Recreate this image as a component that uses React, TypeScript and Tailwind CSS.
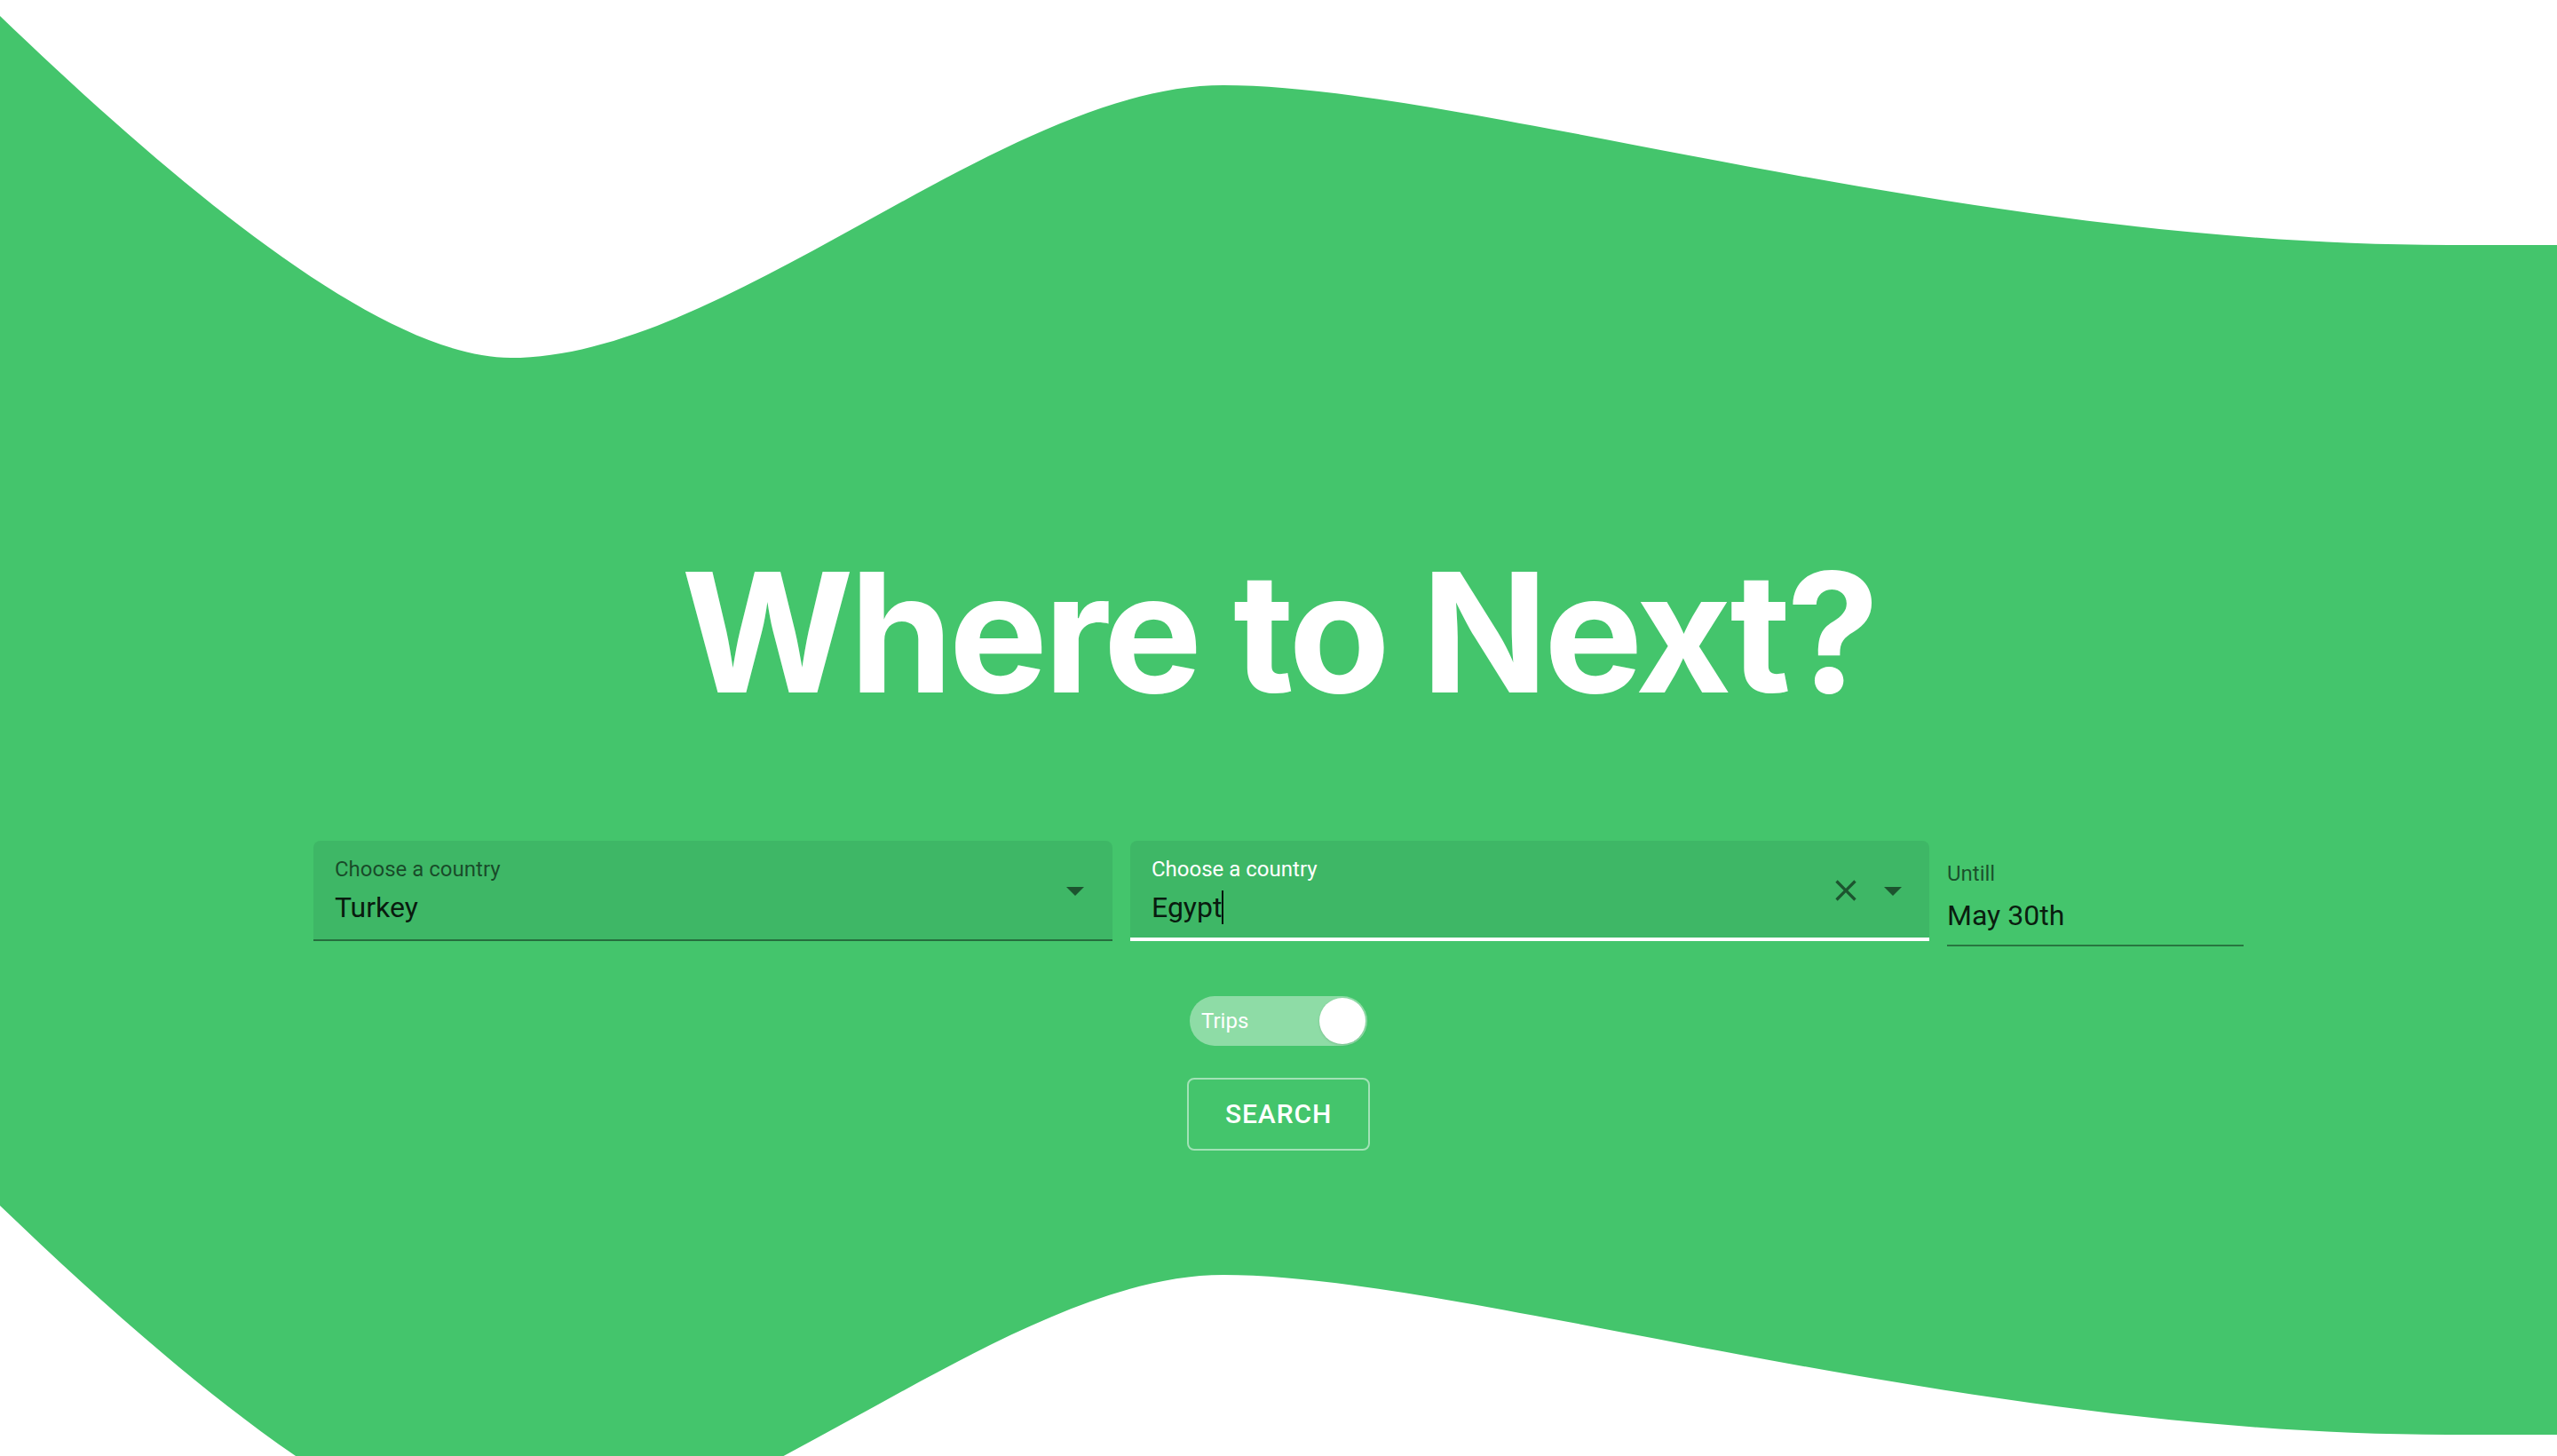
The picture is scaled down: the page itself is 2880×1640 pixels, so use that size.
import React from "react";

function ArrowDrop() {
  return (
    <svg viewBox="0 0 24 24" className="w-[48px] h-[48px] block" fill="rgba(0,0,0,0.54)">
      <path d="M7 10l5 5 5-5z" />
    </svg>
  );
}

function CloseIcon() {
  return (
    <svg viewBox="0 0 24 24" className="w-[40px] h-[40px] block" fill="rgba(0,0,0,0.54)">
      <path d="M19 6.41 17.59 5 12 10.59 6.41 5 5 6.41 10.59 12 5 17.59 6.41 19 12 13.41 17.59 19 19 17.59 13.41 12z" />
    </svg>
  );
}

export default function App() {
  return (
    <div className="w-full h-[1640px] flex flex-col bg-white overflow-hidden font-['Roboto',sans-serif]">
      <svg
        className="block w-full h-[403px] shrink-0"
        viewBox="0 0 2880 403"
        preserveAspectRatio="none"
      >
        <path
          d="M0,18 C200,210 430,403 575,403 C820,403 1130,96 1378,96 C1650,96 2200,276 2757,276 L2880,276 L2880,404 L0,404 Z"
          fill="#44c56c"
        />
      </svg>

      <main className="h-[955px] shrink-0 bg-[#44c56c] flex flex-col items-center">
        <h1 className="mt-[216px] text-[187px] leading-none font-bold tracking-[-4.6px] text-white font-['Inter',sans-serif]">
          Where to Next?
        </h1>

        <div className="mt-[141px] flex items-start gap-[20px]">
          {/* Field 1 */}
          <div className="w-[900px] h-[113px] rounded-t-[8px] bg-[#3eb766] border-b-2 border-black/40 flex items-center justify-between pl-[24px] pr-[18px]">
            <div className="flex flex-col self-start pt-[20px]">
              <span className="text-[24px] leading-[24px] text-black/60">Choose a country</span>
              <span className="mt-[15px] text-[32px] leading-[32px] text-black/[0.87]">Turkey</span>
            </div>
            <ArrowDrop />
          </div>

          {/* Field 2 (focused) */}
          <div className="w-[900px] h-[113px] rounded-t-[8px] bg-[#3eb766] border-b-4 border-white flex items-center justify-between pl-[24px] pr-[17px]">
            <div className="flex flex-col self-start pt-[20px]">
              <span className="text-[24px] leading-[24px] text-white">Choose a country</span>
              <div className="mt-[15px] flex items-center h-[32px]">
                <span className="text-[32px] leading-[32px] text-black/[0.87]">Egypt</span>
                <span className="w-[2px] h-[38px] bg-black/90 shrink-0" />
              </div>
            </div>
            <div className="flex items-center gap-[9px] pt-[2px]">
              <CloseIcon />
              <ArrowDrop />
            </div>
          </div>

          {/* Field 3 (standard) */}
          <div className="w-[334px] flex flex-col pt-[25px]">
            <span className="text-[24px] leading-[24px] text-black/60">Untill</span>
            <div className="mt-[19px] pb-[15px] border-b-2 border-black/40">
              <span className="text-[32px] leading-[32px] text-black/[0.87]">May 30th</span>
            </div>
          </div>
        </div>

        {/* Toggle */}
        <div className="mt-[56px] w-[200px] h-[56px] rounded-full bg-white/40 flex items-center justify-between pl-[13px] pr-[2px]">
          <span className="text-[24px] leading-[24px] text-white">Trips</span>
          <span className="w-[52px] h-[52px] rounded-full bg-white shadow-sm" />
        </div>

        {/* Button */}
        <button className="mt-[36px] w-[206px] h-[82px] rounded-[8px] border-2 border-white/50 text-white text-[30px] leading-none font-medium tracking-[0.9px] flex items-center justify-center">
          SEARCH
        </button>
      </main>

      <svg
        className="block w-full h-[282px] shrink-0"
        viewBox="0 0 2880 282"
        preserveAspectRatio="none"
      >
        <path
          d="M0,-1 L0,0 C200,192 430,385 575,385 C820,385 1130,78 1378,78 C1650,78 2200,258 2757,258 L2880,258 L2880,-1 Z"
          fill="#44c56c"
        />
      </svg>
    </div>
  );
}
